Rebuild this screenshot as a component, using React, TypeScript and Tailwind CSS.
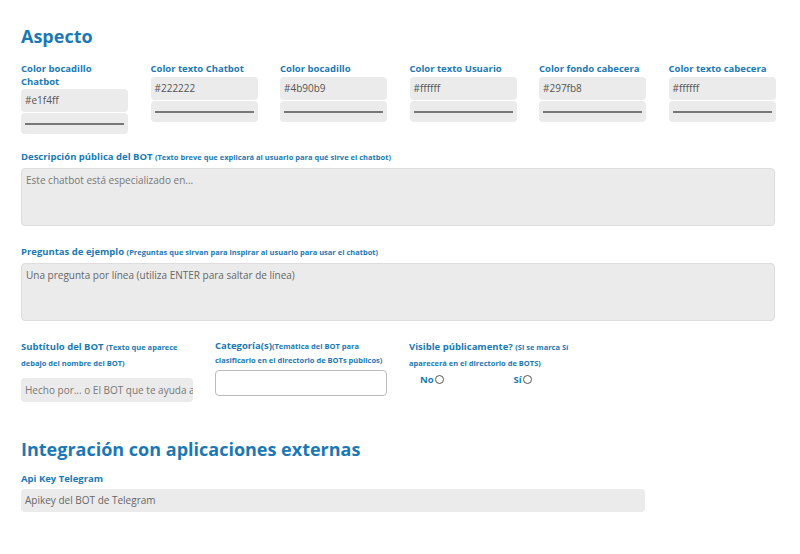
import React from "react";

const F = { fontFamily: "'Open Sans', 'DejaVu Sans', sans-serif" };
const L = "text-[#1a79b5] font-bold text-[9.5px] leading-[13px]";

function ColorField({ label, value, two }: { label: string; value: string; two?: boolean }) {
  return (
    <div className="w-[107px] flex flex-col">
      <div className={L} style={{ height: two ? 24 : 12, marginBottom: 3 }}>{label}</div>
      <div className="h-[23px] bg-[#ebebeb] rounded-sm text-[10px] text-[#555] px-1 flex items-center">{value}</div>
      <div className="h-[21px] mt-[1px] bg-[#ebebeb] rounded-sm flex items-center px-1"><div className="h-[2px] w-full bg-[#777]" /></div>
    </div>
  );
}

export default function App() {
  return (
    <div className="w-[800px] h-[554px] bg-white px-[21px] pt-[25px] overflow-hidden" style={F}>
      <h2 className="text-[#1a79b5] font-bold text-[18px] leading-[22px]">Aspecto</h2>
      <div className="flex gap-[22.5px] mt-[15px]">
        <ColorField label="Color bocadillo Chatbot" value="#e1f4ff" two />
        <ColorField label="Color texto Chatbot" value="#222222" />
        <ColorField label="Color bocadillo Usuario" value="#4b90b9" />
        <ColorField label="Color texto Usuario" value="#ffffff" />
        <ColorField label="Color fondo cabecera" value="#297fb8" />
        <ColorField label="Color texto cabecera" value="#ffffff" />
      </div>
      <div className="mt-[16px] w-[754px]">
        <div className={L}>Descripción pública del BOT <span className="text-[7.5px]">(Texto breve que explicará al usuario para qué sirve el chatbot)</span></div>
        <div className="mt-[4px] h-[58px] bg-[#ebebeb] rounded-sm border border-[#ddd] text-[10px] text-[#777] px-1 pt-[4px]">Este chatbot está especializado en...</div>
        <div className={`${L} mt-[19px]`}>Preguntas de ejemplo <span className="text-[7.5px]">(Preguntas que sirvan para inspirar al usuario para usar el chatbot)</span></div>
        <div className="mt-[4px] h-[58px] bg-[#ebebeb] rounded-sm border border-[#ddd] text-[10px] text-[#666] px-1 pt-[4px]">Una pregunta por línea (utiliza ENTER para saltar de línea)</div>
      </div>
      <div className="flex gap-[22px] mt-[18px]">
        <div className="w-[172px]">
          <div className="text-[#1a79b5] font-bold text-[9.5px] leading-[16px]">Subtítulo del BOT <span className="text-[7.5px] leading-[16px]">(Texto que aparece debajo del nombre del BOT)</span></div>
          <div className="mt-[7px] h-[24px] bg-[#ebebeb] rounded-sm text-[10px] text-[#777] px-1 flex items-center whitespace-nowrap overflow-hidden">Hecho por... o El BOT que te ayuda a...</div>
        </div>
        <div className="w-[172px]">
          <div className="text-[#1a79b5] font-bold text-[9.5px] leading-[14px]">Categoría(s)<span className="text-[7.5px] leading-[14px]">(Temática del BOT para clasificarlo en el directorio de BOTs públicos)</span></div>
          <div className="mt-[3px] h-[26px] bg-white border border-[#bbb] rounded-sm" />
        </div>
        <div className="w-[175px]">
          <div className="text-[#1a79b5] font-bold text-[9.5px] leading-[16px]">Visible públicamente? <span className="text-[7.5px] leading-[16px]">(Si se marca Sí aparecerá en el directorio de BOTS)</span></div>
          <div className="flex mt-[2px] pl-[11px] items-center">
            <span className={L}>No</span><span className="w-[9px] h-[9px] rounded-full border border-[#555] ml-[1px]" />
            <span className={`${L} ml-[70px]`}>Sí</span><span className="w-[9px] h-[9px] rounded-full border border-[#555] ml-[1px]" />
          </div>
        </div>
      </div>
      <h2 className="text-[#1a79b5] font-bold text-[18px] leading-[22px] mt-[36px]">Integración con aplicaciones externas</h2>
      <div className={`${L} mt-[12px]`}>Api Key Telegram</div>
      <div className="mt-[4px] w-[624px] h-[23px] bg-[#ebebeb] rounded-sm text-[10px] text-[#666] px-1 flex items-center">Apikey del BOT de Telegram</div>
    </div>
  );
}
